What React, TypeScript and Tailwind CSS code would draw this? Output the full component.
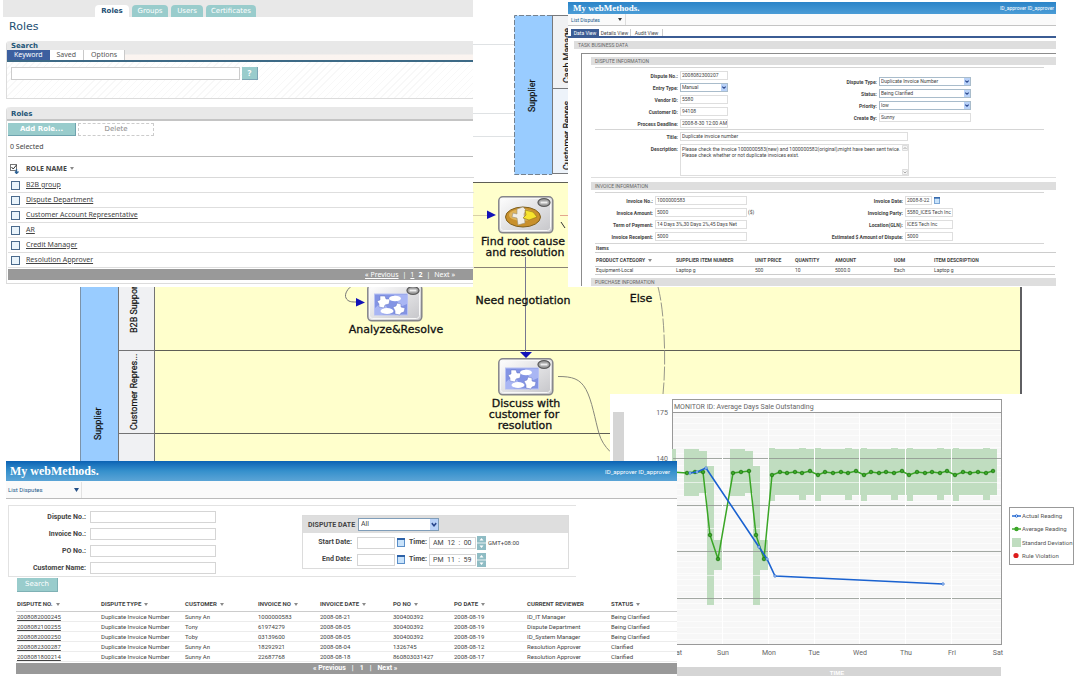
import type { ReactNode } from 'react';

const roles = [
  'B2B group',
  'Dispute Department',
  'Customer Account Representative',
  'AR',
  'Credit Manager',
  'Resolution Approver',
];

const disputes = [
  ['2008082000245', 'Duplicate Invoice Number', 'Sunny An', '1000000583', '2008-08-21', '300400392', '2008-08-19', 'ID_IT Manager', 'Being Clarified'],
  ['2008082100255', 'Duplicate Invoice Number', 'Tony', '61974279', '2008-08-05', '300400392', '2008-08-19', 'Dispute Department', 'Being Clarified'],
  ['2008082000250', 'Duplicate Invoice Number', 'Toby', '03139600', '2008-08-05', '300400392', '2008-08-19', 'ID_System Manager', 'Being Clarified'],
  ['2008082300287', 'Duplicate Invoice Number', 'Sunny An', '18292921', '2008-08-04', '1326745', '2008-08-12', 'Resolution Approver', 'Clarified'],
  ['2008081800214', 'Duplicate Invoice Number', 'Sunny An', '22687768', '2008-08-18', '860803031427', '2008-08-17', 'Resolution Approver', 'Clarified'],
];

const disputeHeads = ['DISPUTE NO.', 'DISPUTE TYPE', 'CUSTOMER', 'INVOICE NO', 'INVOICE DATE', 'PO NO', 'PO DATE', 'CURRENT REVIEWER', 'STATUS'];

function SortMark() {
  return (
    <svg viewBox="0 0 4 3" className="ml-[3px] inline-block h-[3px] w-1 align-middle">
      <path d="M0 0h4L2 3z" fill="#8a8a8a" />
    </svg>
  );
}

function Calendar({ className }: { className: string }) {
  return (
    <svg viewBox="0 0 8 9" className={className} aria-hidden="true">
      <rect x="0.5" y="0.5" width="7" height="8" fill="#c9e3fb" stroke="#5b8fc9" />
      <rect width="8" height="2" fill="#2d62a8" />
    </svg>
  );
}

function Arrow({ className }: { className: string }) {
  return (
    <svg viewBox="0 0 8 10" preserveAspectRatio="none" className={className} aria-hidden="true">
      <rect width="8" height="10" fill="#b9d2f8" />
      <path d="M1.8 3.8L4 6.2l2.2-2.4" fill="none" stroke="#27458c" strokeWidth="1.5" />
    </svg>
  );
}

/* ---------- Process diagram ---------- */

function StepIcon({ x, y, gold }: { x: number; y: number; gold?: boolean }) {
  return (
    <g transform={`translate(${x} ${y})`}>
      <rect x="0.8" y="0.8" width="54" height="36" rx="4" fill="url(#step)" stroke="#85858a" strokeWidth="1.5" />
      <rect x="2.5" y="2.5" width="50" height="32" rx="3" fill="none" stroke="#f8f8f8" />
      {gold ? (
        <g>
          <ellipse cx="25" cy="21" rx="17.5" ry="10" fill="#c8902c" stroke="#80601e" />
          <ellipse cx="24" cy="19" rx="13" ry="6" fill="#e0b458" />
          <path d="M19 13l6-2 3 3-2 4 1 9-7 2-1-7-5-1 1-4 4 1z" fill="#f1eee6" stroke="#9a9078" strokeWidth="0.6" />
          <path d="M27 14l8 2 4 5-8 3-6-2 3-3z" fill="#f7e42e" stroke="#8d7614" strokeWidth="0.6" />
        </g>
      ) : (
        <g>
          <rect x="7.5" y="10" width="33" height="21" fill="#8394e4" stroke="#b8c2f3" />
          <path d="M8 24l8-7 5 8-6 6H8z M27 11h13v9l-7 3z" fill="#a9b6f4" />
          <path d="M10 17l3-1v-4h5l1 3h4l-1 5-4 1-1 3-5-1v-3z" fill="#fff" stroke="#6474c4" strokeWidth="0.5" />
          <path d="M26 23l3-1 1-3 4 1v3l4 1-1 4-3 1-1 2-5-1v-3z" fill="#fff" stroke="#6474c4" strokeWidth="0.5" />
          <ellipse cx="28" cy="14.5" rx="6" ry="2.8" fill="#fff" />
          <ellipse cx="20" cy="27" rx="6.5" ry="3" fill="#fff" />
        </g>
      )}
      <ellipse cx="46" cy="6.5" rx="6" ry="3.8" fill="#a5a5a5" stroke="#5c5c5c" strokeWidth="1.3" />
      <rect x="42.5" y="5.5" width="7" height="2" fill="#eee" />
    </g>
  );
}

function ProcessDiagram() {
  return (
    <svg viewBox="0 0 1079 678" className="absolute left-0 top-0 h-[678px] w-[1079px]" role="img" aria-label="Dispute process">
      <defs>
        <linearGradient id="step" x1="0" y1="0" x2="1" y2="1">
          <stop offset="0" stopColor="#ffffff" />
          <stop offset="1" stopColor="#c4c4c8" />
        </linearGradient>
      </defs>

      {/* upper supplier pool */}
      <path d="M473 44.5H514M473 113.5H514M473 136.5H514" stroke="#dfe2e4" />
      <rect x="514.5" y="15.5" width="38" height="159" fill="#99ccff" />
      <path d="M552 15.5H514.5V174.5H552" fill="none" stroke="#75828f" strokeDasharray="5 2" />
      <rect x="552.5" y="15.5" width="40" height="73" fill="#f0f1f3" stroke="#77797c" />
      <rect x="552.5" y="88.5" width="40" height="85" fill="#edf3fa" stroke="#77797c" />

      {/* lanes */}
      <rect x="155" y="182" width="867" height="280" fill="#ffffcc" />
      <path d="M473 182.5H570M155 350.5H1021M155 433.5H611" stroke="#5e5e55" />
      <path d="M473 215.5H487" stroke="#d8d0a8" />
      <path d="M473 267.5H570" stroke="#8a8375" />
      <rect x="1020" y="286" width="2" height="108" fill="#5f5f62" />
      <rect x="80.5" y="180.5" width="38" height="290" fill="#99ccff" stroke="#7c93aa" />
      <rect x="118.5" y="180.5" width="36" height="290" fill="#f0f1f3" stroke="#737374" />
      <path d="M118 350.5H155M118 433.5H155" stroke="#737374" />

      <g fill="#111" stroke="#111" strokeWidth="0.2" fontFamily="Roboto, sans-serif" fontSize="9">
        <text transform="translate(535 112) rotate(-90)">Supplier</text>
        <text transform="translate(570 83) rotate(-90)">Cash Manage</text>
        <text transform="translate(570 170) rotate(-90)">Customer Repres</text>
        <text transform="translate(101 440) rotate(-90)">Supplier</text>
        <text transform="translate(137 333) rotate(-90)">B2B Support</text>
        <text transform="translate(137 430) rotate(-90)">Customer Repres...</text>
      </g>

      {/* flows */}
      <g fill="none" stroke="#8f8fa0">
        <path d="M560 215.5H570" stroke="#e3a68e" />
        <path d="M525.5 257V352" stroke="#777790" />
        <path d="M353 285c-5 3-9 9-7 13s6 4 10 4" stroke="#777" />
        <path d="M558 376.5c14 0 22 2 28 13s9 30 13 44c2 7 6 13 11 18" stroke="#88887c" />
        <path d="M658 287c3 11 5 27 6 47s1 40-1 60" stroke="#97978a" strokeDasharray="14 2" />
      </g>
      <path d="M487 210.5l9 4.5-9 4z M356 298l9 4.5-9 4z M520 352h12l-6 6z" fill="#1212b8" />
      <path d="M561 222l4 6" stroke="#333" />

      <StepIcon x={498} y={196} gold />
      <StepIcon x={367} y={284} />
      <StepIcon x={498} y={358} />

      <g fill="#111" stroke="#111" strokeWidth="0.3" fontFamily="'DejaVu Sans', sans-serif" fontSize="11" textAnchor="middle">
        <text x="523" y="245">Find root cause</text>
        <text x="525" y="256">and resolution</text>
        <text x="523" y="304">Need negotiation</text>
        <text x="641" y="302">Else</text>
        <text x="396" y="333">Analyze&amp;Resolve</text>
        <text x="526" y="407">Discuss with</text>
        <text x="524" y="418">customer for</text>
        <text x="525" y="429">resolution</text>
      </g>
    </svg>
  );
}

/* ---------- Roles window ---------- */

function SearchTab({ active, children }: { active?: boolean; children: ReactNode }) {
  return (
    <button
      type="button"
      className={`px-[7px] text-[7px] leading-[10px] ${active ? 'bg-[#3c5f9f] text-white' : 'border-r border-[#c9c9c9] bg-white text-[#555]'}`}
    >
      {children}
    </button>
  );
}

function RolesWindow() {
  return (
    <section className="absolute left-0 top-0 w-[473px] bg-white pb-[3px] pl-[3px] font-['Noto_Sans',sans-serif] text-[8px] text-[#444]">
      <nav className="flex h-[17px] items-end gap-[3px] bg-[#e8e8e8] pl-[92px] font-['DejaVu_Sans',sans-serif] text-[7px] font-bold leading-3 text-white">
        <a href="#roles" className="w-[34px] rounded-t bg-white text-center text-[#1d4e72]">Roles</a>
        <a href="#groups" className="w-9 rounded-t bg-[#99cccc] text-center font-normal">Groups</a>
        <a href="#users" className="w-8 rounded-t bg-[#99cccc] text-center font-normal">Users</a>
        <a href="#certificates" className="w-[50px] rounded-t bg-[#99cccc] text-center font-normal">Certificates</a>
      </nav>
      <h1 className="flex h-6 items-center pb-1 pl-[6px] font-['DejaVu_Sans',sans-serif] text-[11px] text-[#1d4e72]">Roles</h1>

      <div className="ml-[3px] rounded-tl border-b border-l border-[#dcdcdc]">
        <div className="rounded-tl bg-[#e8e8e8]">
          <h2 className="h-[9px] pl-1 font-['DejaVu_Sans',sans-serif] text-[7px] font-bold leading-[10px] text-[#1d5577]">Search</h2>
          <div className="flex h-3 border-b-2 border-[#3d6a86] bg-linear-to-b from-[#e8e8e8] from-40% to-[#fbf4f0] to-50%">
            <SearchTab active>Keyword</SearchTab>
            <SearchTab>Saved</SearchTab>
            <SearchTab>Options</SearchTab>
          </div>
        </div>
        <div className="flex h-9 items-start gap-[2px] bg-[repeating-linear-gradient(135deg,#fff_0px,#fff_4px,#f8f8f8_4px,#f8f8f8_5px)] pl-1 pt-[5px]">
          <input aria-label="Keyword" className="h-[13px] w-[229px] border border-[#ccc] bg-white px-1" />
          <button type="button" className="h-[13px] w-4 border-b border-r border-[#7da5b5] bg-[#99cccc] text-[8px] font-bold leading-3 text-white">?</button>
        </div>
      </div>

      <div className="ml-[3px] mt-2 rounded-tl border-b border-l border-[#dcdcdc] pb-[3px]">
        <h2 className="h-[14px] rounded-tl border-b-2 border-[#c4c4c4] bg-[#e8e8e8] pl-1 font-['DejaVu_Sans',sans-serif] text-[7px] font-bold leading-[14px] text-[#1d5577]">Roles</h2>
        <div className="mt-[2px] flex gap-[2px] pl-px font-['DejaVu_Sans',sans-serif] text-[7px] leading-[11px]">
          <button type="button" className="h-[13px] w-[68px] border-b border-r border-[#6fa3ae] bg-[#99cccc] font-bold text-white">Add Role...</button>
          <button type="button" className="h-[13px] w-[76px] border border-dashed border-[#ccc] text-[#888]">Delete</button>
        </div>
        <p className="ml-px h-[21px] border-b border-[#bbb] pl-[2px] text-[7px] leading-[21px]">0 Selected</p>
        <table className="ml-px w-[466px] border-collapse text-left">
          <thead>
            <tr className="h-5 border-b border-[#d9d9d9]">
              <th className="w-[18px] pl-[2px] pt-1">
                <svg viewBox="0 0 9 10" className="h-[10px] w-[9px]" aria-hidden="true">
                  <rect x="0.5" y="0.5" width="6" height="6" fill="#fff" stroke="#777" />
                  <path d="M1.5 3l1.7 2L6.5 1" fill="none" stroke="#333" />
                  <path d="M6.5 5v4M5 7.5L6.5 9.5 8.5 7.5" fill="none" stroke="#2e6295" strokeWidth="1.3" />
                </svg>
              </th>
              <th className="pt-1 text-[7px] font-bold leading-[10px]">ROLE NAME<SortMark /></th>
            </tr>
          </thead>
          <tbody>
            {roles.map((role) => (
              <tr key={role} className="h-[15px] border-b border-[#dedede]">
                <td className="pl-[3px] pt-[2px] leading-none">
                  <input
                    type="checkbox"
                    aria-label={role}
                    className="block h-[9px] w-[9px] appearance-none border border-[#4a6a8c] bg-[#eaf4fb] checked:bg-[#4a6a8c]"
                  />
                </td>
                <td className="text-[7px] leading-3"><a href="#role" className="underline">{role}</a></td>
              </tr>
            ))}
          </tbody>
        </table>
        <div className="ml-px mt-px flex h-[11px] items-center justify-end gap-1 bg-[#999] pr-[18px] text-[7px] leading-none text-white">
          <a href="#prev" className="underline">« Previous</a>
          <span>|</span>
          <a href="#p1" className="underline">1</a>
          <b>2</b>
          <span>|</span>
          <a href="#next">Next »</a>
        </div>
      </div>
    </section>
  );
}

/* ---------- Dispute details window ---------- */

function DetailField({ label, value, labelWidth, width, select, children }: {
  label: string;
  value: string;
  labelWidth: string;
  width: string;
  select?: boolean;
  children?: ReactNode;
}) {
  return (
    <div className="flex h-3 items-center">
      <label className="flex items-center gap-[2px]">
        <span className={`${labelWidth} whitespace-nowrap pt-[2px] text-right font-bold`}>{label}</span>
        {select ? (
          <span className={`relative ${width}`}>
            <select defaultValue={value} className="block h-[9px] w-full appearance-none border border-[#a9bccb] bg-white pl-px leading-[7px]">
              <option>{value}</option>
            </select>
            <Arrow className="pointer-events-none absolute right-px top-px h-[7px] w-[6px]" />
          </span>
        ) : (
          <input defaultValue={value} className={`${width} h-[9px] border border-[#dedede] bg-white pl-px leading-[7px]`} />
        )}
      </label>
      {children}
    </div>
  );
}

function SectionBar({ children }: { children: ReactNode }) {
  return <h3 className="h-2 bg-[#dedede] pl-1 text-[5px] leading-[9px] text-[#666]">{children}</h3>;
}

function DetailsWindow() {
  return (
    <section className="absolute left-[568px] top-[2px] h-[285px] w-[488px] overflow-hidden bg-white font-[Roboto,sans-serif] text-[5px] leading-[6px] text-[#444]">
      <header className="flex h-3 items-center justify-between bg-linear-to-b from-[#2b84c8] to-[#4a9cd6] pl-[5px] pr-[2px] leading-3">
        <span className="font-['Liberation_Serif',serif] text-[9px] font-bold text-white">My webMethods.</span>
        <span className="text-white">ID_approver ID_approver</span>
      </header>
      <div className="flex h-3 items-center border-b border-[#c4c4c4] bg-[#fafafa] pl-[3px] text-[#1d5c8c]">
        <button type="button" className="flex h-full w-[55px] items-center justify-between border-r border-[#ddd] pr-[3px]">
          List Disputes
          <svg viewBox="0 0 4 3" className="h-[3px] w-1"><path d="M0 0h4L2 3z" fill="#333" /></svg>
        </button>
      </div>
      <div className="mt-[3px] flex h-[9px] border-b-2 border-[#3b5c94] pl-[3px] leading-[8px]">
        <button type="button" className="w-7 bg-[#3b5c94] text-white">Data View</button>
        <button type="button" className="w-8 border-r border-[#ccc]">Details View</button>
        <button type="button" className="w-8 border-r border-[#ccc]">Audit View</button>
      </div>
      <div className="ml-[6px] mt-[3px]">
        <SectionBar>TASK BUSINESS DATA</SectionBar>
        <div className="ml-[7px] mt-1 border-l border-t border-[#8c8c8c] pl-[9px] pt-[3px]">
          <SectionBar>DISPUTE INFORMATION</SectionBar>
          <div className="ml-1 mr-3 mt-[2px] grid grid-cols-[200px_1fr] border-b border-t border-[#d5d5d5] pt-px">
            <div>
              <DetailField label="Dispute No.:" value="2008082300207" labelWidth="w-[83px]" width="w-12" />
              <DetailField label="Entry Type:" value="Manual" labelWidth="w-[83px]" width="w-12" select />
              <DetailField label="Vendor ID:" value="5580" labelWidth="w-[83px]" width="w-12" />
              <DetailField label="Customer ID:" value="94108" labelWidth="w-[83px]" width="w-12" />
              <DetailField label="Process Deadline:" value="2008-8-30 12:00 AM" labelWidth="w-[83px]" width="w-12" />
            </div>
            <div className="pt-[6px]">
              <DetailField label="Dispute Type:" value="Duplicate Invoice Number" labelWidth="w-[82px]" width="w-[92px]" select />
              <DetailField label="Status:" value="Being Clarified" labelWidth="w-[82px]" width="w-[92px]" select />
              <DetailField label="Priority:" value="low" labelWidth="w-[82px]" width="w-[92px]" select />
              <DetailField label="Create By:" value="Sunny" labelWidth="w-[82px]" width="w-[92px]" />
            </div>
          </div>
          <div className="ml-1">
            <DetailField label="Title:" value="Duplicate invoice number" labelWidth="w-[83px]" width="w-[228px]" />
          </div>
          <label className="flex gap-[2px] border-b border-[#dedede] pb-px pl-1 pt-[2px]">
            <span className="w-[83px] pt-[2px] text-right font-bold">Description:</span>
            <span className="relative">
              <textarea
                className="block h-8 w-[229px] resize-none overflow-hidden border border-[#dedede] bg-white pl-px pt-px"
                defaultValue={'Please check the invoice 1000000583(new) and 1000000582(original),might have been sent twice.\nPlease check whether or not duplicate invoices exist.'}
              />
              <svg viewBox="0 0 6 30" className="absolute right-px top-px h-[30px] w-[6px]" aria-hidden="true">
                <path d="M0.5 0.5h5v5h-5zM0.5 24.5h5v5h-5z" fill="#f4f4f4" stroke="#ddd" />
                <path d="M1.5 4L3 2.5 4.5 4M1.5 26.5L3 28 4.5 26.5" fill="none" stroke="#aaa" />
              </svg>
            </span>
          </label>
          <div className="h-1" />
          <SectionBar>INVOICE INFORMATION</SectionBar>
          <div className="ml-1 mr-3 mt-[2px] grid grid-cols-[200px_1fr] border-b border-t border-[#d5d5d5] py-px">
            <div>
              <DetailField label="Invoice No.:" value="1000000583" labelWidth="w-[58px]" width="w-[92px]" />
              <DetailField label="Invoice Amount:" value="5000" labelWidth="w-[58px]" width="w-[92px]"><span className="pl-px">($)</span></DetailField>
              <DetailField label="Term of Payment:" value="14 Days 3%,30 Days 2%,45 Days Net" labelWidth="w-[58px]" width="w-[92px]" />
              <DetailField label="Invoice Receipent:" value="5000" labelWidth="w-[58px]" width="w-[92px]" />
            </div>
            <div>
              <DetailField label="Invoice Date:" value="2008-8-22" labelWidth="w-[108px]" width="w-[27px]"><Calendar className="ml-[2px] h-[7px] w-[6px]" /></DetailField>
              <DetailField label="Invoicing Party:" value="5580_ICES Tech Inc" labelWidth="w-[108px]" width="w-12" />
              <DetailField label="Location(GLN):" value="ICES Tech Inc" labelWidth="w-[108px]" width="w-12" />
              <DetailField label="Estimated $ Amount of Dispute:" value="5000" labelWidth="w-[108px]" width="w-12" />
            </div>
          </div>
          <h4 className="ml-1 h-[9px] border-b border-[#ccc] pl-px font-bold leading-[9px]">Items</h4>
          <table className="ml-1 mt-[2px] w-[460px] table-fixed border-collapse text-left">
            <thead>
              <tr className="h-[11px] border-b border-[#ccc]">
                <th className="w-[81px] pl-px">PRODUCT CATEGORY<SortMark /></th>
                <th className="w-[79px]">SUPPLIER ITEM NUMBER</th>
                <th className="w-10">UNIT PRICE</th>
                <th className="w-10">QUANTITY</th>
                <th className="w-[59px]">AMOUNT</th>
                <th className="w-10">UOM</th>
                <th>ITEM DESCRIPTION</th>
              </tr>
            </thead>
            <tbody>
              <tr className="h-2 border-b border-[#ccc]">
                <td className="pl-px">Equipment-Local</td>
                <td>Laptop g</td>
                <td>500</td>
                <td>10</td>
                <td>5000.0</td>
                <td>Each</td>
                <td>Laptop g</td>
              </tr>
            </tbody>
          </table>
          <div className="h-[3px]" />
          <SectionBar>PURCHASE INFORMATION</SectionBar>
        </div>
      </div>
    </section>
  );
}

/* ---------- Monitor chart ---------- */

const bands: number[][] = [
  [672, 676, 449, 472],
  [684, 699, 449, 496],
  [699, 707, 451, 493],
  [707, 714, 466, 605],
  [714, 722, 540, 570],
  [730, 745, 449, 496],
  [745, 753, 451, 493],
  [753, 760, 466, 605],
  [760, 768, 540, 570],
];
const average: number[][] = [[687, 473], [695, 472], [703, 472], [710, 535], [718, 559], [733, 473], [741, 472], [749, 471], [756, 535], [764, 559]];

// every full day repeats the same reading
for (let day = 0; day < 5; day++) {
  const x = 769 + day * 46;
  bands.push([x, x + 6, 448, 501], [x + 6, x + 30, 449, 495], [x + 30, x + 37, 448, 500], [x + 37, day === 4 ? x + 44 : x + 46, 449, 495]);
  [475, 472, 473, 472, 473, 471].forEach((y, i) => average.push([Math.round(772 + day * 45.8 + i * 7.6), y]));
}

const actual = [[690, 473], [697, 472], [706, 468], [759, 547], [767, 559], [775, 576], [943, 584]];
const days = ['Sat', 'Sun', 'Mon', 'Tue', 'Wed', 'Thu', 'Fri', 'Sat'];

function MonitorWindow() {
  return (
    <section className="absolute left-[610px] top-[394px] flex h-[284px] w-[469px] items-start bg-white">
      <svg viewBox="610 394 397 284" className="h-[284px] w-[397px] shrink-0" role="img" aria-label="Average Days Sale Outstanding">
        <rect x="613" y="412" width="11" height="255" fill="#d5d5d5" />
        <rect x="672.5" y="399.5" width="329" height="245" fill="#f7f7f7" stroke="#999" />
        {Array.from({ length: 39 }, (_, i) => (
          <path key={i} d={`M673 ${417 + i * 6}.5H1001`} stroke="#fff" strokeOpacity="0.6" />
        ))}
        <rect x="672.5" y="399.5" width="329" height="13" fill="#fff" stroke="#999" />
        {bands.map(([x1, x2, y1, y2], i) => (
          <rect key={i} x={x1} y={y1} width={x2 - x1} height={y2 - y1} fill="#c0ddc0" />
        ))}
        <path d="M673 458.5H1001M673 505.5H1001M673 551.5H1001M673 598.5H1001" stroke="#8d938d" strokeOpacity="0.8" />
        <path d="M673 482.5H1001M673 528.5H1001M673 575.5H1001" stroke="#fff" strokeOpacity="0.6" />
        <path d="M722.5 413V644M768.5 413V644M814.5 413V644M859.5 413V644M905.5 413V644M951.5 413V644" stroke="#fff" />
        <polyline points={`672,472 ${average.map((p) => p.join(',')).join(' ')}`} fill="none" stroke="#3aa626" strokeWidth="1.5" />
        {average.map(([x, y], i) => (
          <circle key={i} cx={x} cy={y} r="1.8" fill="#3aa626" stroke="#1d7a10" strokeWidth="0.8" />
        ))}
        <polyline points={actual.map((p) => p.join(',')).join(' ')} fill="none" stroke="#1a62d0" strokeWidth="1.6" />
        {actual.map(([x, y], i) => (
          <circle key={i} cx={x} cy={y} r="1.2" fill="#fff" stroke="#1a62d0" strokeWidth="0.8" />
        ))}
        <g fill="#666" fontFamily="Roboto, sans-serif" fontSize="7">
          <text x="674" y="409">MONITOR ID: Average Days Sale Outstanding</text>
          <text x="668" y="415" textAnchor="end">175</text>
          <text x="668" y="461" textAnchor="end">140</text>
          {days.map((day, i) => (
            <text key={i} x={677 + Math.round(i * 45.8)} y="655" textAnchor="middle">{day}</text>
          ))}
        </g>
        <rect x="677" y="667" width="324" height="9" fill="#d5d5d5" />
        <text x="837" y="675" textAnchor="middle" fill="#fff" fontFamily="'Liberation Sans', sans-serif" fontSize="6" fontWeight="bold">TIME</text>
      </svg>
      <ul className="ml-[2px] mt-[113px] flex h-[58px] w-[65px] shrink-0 flex-col justify-around border border-[#999] px-[2px] py-px font-[Roboto,sans-serif] text-[6px] leading-[10px] text-[#555]">
        <li className="flex items-center gap-px whitespace-nowrap">
          <svg viewBox="0 0 9 8" className="h-2 w-[9px] shrink-0"><path d="M0 4h9" stroke="#1a62d0" strokeWidth="1.4" /><circle cx="4.5" cy="4" r="1.2" fill="#fff" stroke="#1a62d0" /></svg>
          Actual Reading
        </li>
        <li className="flex items-center gap-px whitespace-nowrap">
          <svg viewBox="0 0 9 8" className="h-2 w-[9px] shrink-0"><path d="M0 4h9" stroke="#3aa626" strokeWidth="1.4" /><circle cx="4.5" cy="4" r="2.2" fill="#3aa626" /></svg>
          Average Reading
        </li>
        <li className="flex items-center gap-px whitespace-nowrap">
          <span className="h-[9px] w-[9px] shrink-0 bg-[#c0ddc0]" />
          Standard Deviation
        </li>
        <li className="flex items-center gap-px whitespace-nowrap">
          <svg viewBox="0 0 9 8" className="h-2 w-[9px] shrink-0"><circle cx="4" cy="3.5" r="2.6" fill="#dd1c1c" /></svg>
          Rule Violation
        </li>
      </ul>
    </section>
  );
}

/* ---------- Disputes list window ---------- */

function DateRow({ label, time }: { label: string; time: string }) {
  return (
    <div className="flex h-[17px] items-center">
      <label className="flex items-center gap-[5px]">
        <span className="w-[49px] text-right font-bold">{label}</span>
        <input className="h-3 w-[38px] border border-[#d5d5d5] bg-white" />
      </label>
      <Calendar className="ml-[2px] h-[9px] w-2" />
      <label className="flex items-center gap-[3px] pl-1">
        <span className="w-[17px] font-bold">Time:</span>
        <input defaultValue={time} className="h-3 w-[47px] border border-[#d5d5d5] bg-white pl-[3px]" />
      </label>
      <svg viewBox="0 0 9 14" className="ml-px h-[14px] w-[9px]" aria-hidden="true">
        <rect width="9" height="6.6" fill="#8fbcc4" />
        <rect y="7.4" width="9" height="6.6" fill="#8fbcc4" />
        <path d="M4.5 2l2 2.5h-4zM4.5 12l2-2.5h-4z" fill="#fff" />
      </svg>
    </div>
  );
}

function DisputesWindow() {
  return (
    <section className="absolute left-[6px] top-[461px] w-[671px] bg-white pb-[3px] font-[Roboto,sans-serif] text-[6px] leading-[9px] text-[#444]">
      <header className="flex h-5 items-center justify-between bg-linear-to-b from-[#0a62b4] via-[#3590cc] to-[#5aa4d6] pl-1 pr-[7px]">
        <span className="font-['Liberation_Serif',serif] text-xs font-bold text-white">My webMethods.</span>
        <span className="text-white">ID_approver ID_approver</span>
      </header>
      <div className="flex h-[18px] items-center border-b border-[#bbb] bg-[#fafafa] pl-[2px] text-[#1d5c8c]">
        <button type="button" className="flex h-4 w-[74px] items-center justify-between border-r border-[#e2e2e2] pr-[2px]">
          List Disputes
          <svg viewBox="0 0 5 4" className="h-1 w-[5px]"><path d="M0 0h5L2.5 4z" fill="#244f86" /></svg>
        </button>
      </div>

      <form className="ml-[2px] mt-[6px] text-[7px]">
        <div className="flex w-[568px] items-start border-b border-l border-t border-[#e2e2e2] pt-[2px]">
          <div className="w-[293px]">
            {['Dispute No.:', 'Invoice No.:', 'PO No.:', 'Customer Name:'].map((label) => (
              <label key={label} className="flex h-[17px] items-center gap-1">
                <span className="w-[77px] pt-[2px] text-right font-bold">{label}</span>
                <input className="h-3 w-[126px] border border-[#d5d5d5] bg-white" />
              </label>
            ))}
          </div>
          <fieldset className="mt-[7px] h-[54px] w-[267px] border border-[#dcdcdc]">
            <label className="mb-px flex h-[17px] items-center gap-[2px] bg-[#dedede] pl-[5px]">
              <span className="w-12 whitespace-nowrap pt-[2px] font-bold">DISPUTE DATE</span>
              <span className="relative w-[81px]">
                <select defaultValue="All" className="block h-[13px] w-full appearance-none border border-[#7f9db9] bg-white pl-[2px]">
                  <option>All</option>
                </select>
                <Arrow className="pointer-events-none absolute right-px top-px h-[11px] w-2" />
              </span>
            </label>
            <div className="flex">
              <div>
                <DateRow label="Start Date:" time="AM  12  :  00" />
                <DateRow label="End Date:" time="PM  11  :  59" />
              </div>
              <span className="pl-[2px] pt-1 text-[6px]">GMT+08:00</span>
            </div>
          </fieldset>
        </div>
        <button type="button" className="ml-[9px] mt-px block h-[14px] w-[41px] border-b border-r border-[#7fb1b5] bg-[#99cccc] font-['DejaVu_Sans',sans-serif] text-white">Search</button>
      </form>

      <table className="ml-[10px] mt-[5px] w-[661px] table-fixed border-collapse text-left">
        <thead>
          <tr className="h-[14px] border-b border-[#ccc]">
            {disputeHeads.map((head, i) => (
              <th key={head} className={`pl-px ${['w-[84px]', 'w-[84px]', 'w-[73px]', 'w-[62px]', 'w-[73px]', 'w-[61px]', 'w-[73px]', 'w-[84px]', 'w-[67px]'][i]}`}>
                {head}
                {head !== 'CURRENT REVIEWER' && <SortMark />}
              </th>
            ))}
          </tr>
        </thead>
        <tbody>
          {disputes.map((row) => (
            <tr key={row[0]} className="h-[10px] border-b border-[#ececec] leading-[9px]">
              {row.map((cell, i) => (
                <td key={i} className="whitespace-nowrap pl-px">{i === 0 ? <a href="#dispute" className="underline">{cell}</a> : cell}</td>
              ))}
            </tr>
          ))}
        </tbody>
      </table>
      <div className="ml-[10px] mt-px flex h-[11px] items-center gap-[6px] bg-[#999] pl-[297px] text-[7px] font-bold text-white">
        <a href="#previous">« Previous</a>
        <span>|</span>
        <a href="#page1">1</a>
        <span>|</span>
        <a href="#following">Next »</a>
      </div>
    </section>
  );
}

export default function App() {
  return (
    <main className="relative h-screen min-h-[678px] w-full overflow-hidden bg-white">
      <ProcessDiagram />
      <RolesWindow />
      <DetailsWindow />
      <MonitorWindow />
      <DisputesWindow />
    </main>
  );
}
